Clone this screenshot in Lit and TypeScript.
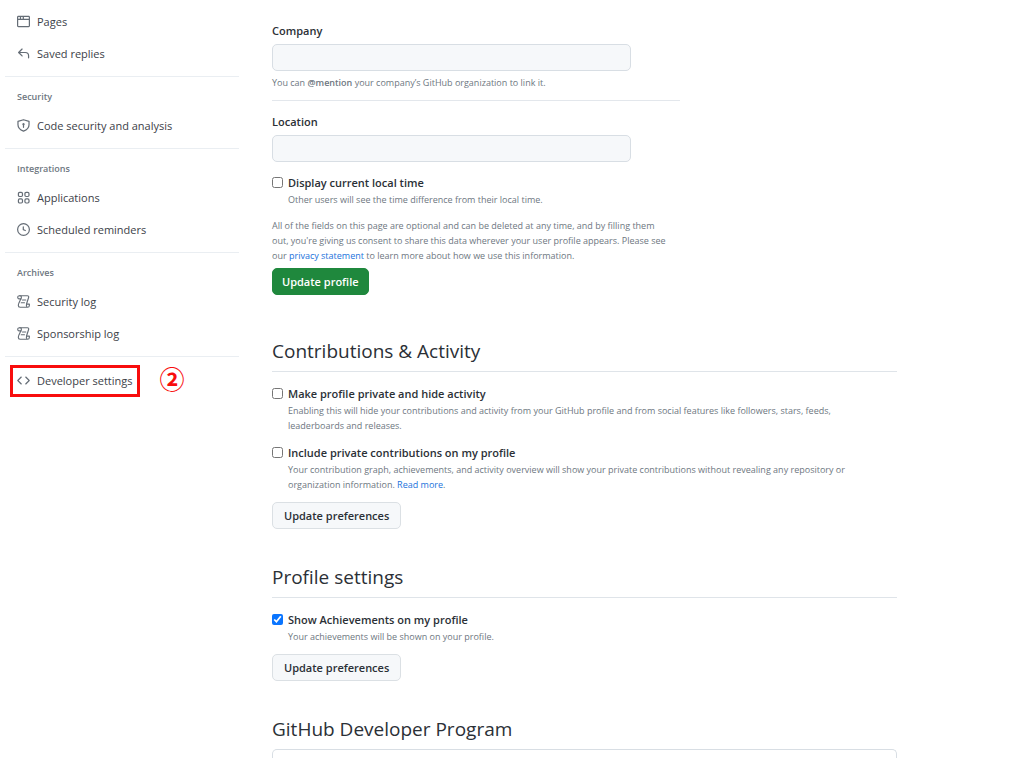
import { LitElement, html, css, svg } from "lit";
import { customElement, property } from "lit/decorators.js";

const icons: Record<string, unknown> = {
  browser: svg`<path d="M0 2.75C0 1.784.784 1 1.75 1h12.5c.966 0 1.75.784 1.75 1.75v10.5A1.75 1.75 0 0 1 14.25 15H1.75A1.75 1.75 0 0 1 0 13.25ZM14.5 6h-13v7.25c0 .138.112.25.25.25h12.500a.25.25 0 0 0 .25-.25Zm-6-3.500v2h6V2.750a.25.25 0 0 0-.25-.25ZM5 2.500v2h2v-2Zm-3.250 0a.25.25 0 0 0-.25.25V4.500h2v-2Z"/>`,
  reply: svg`<path d="M6.780 1.970a.75.75 0 0 1 0 1.060L3.810 6h6.440A4.750 4.750 0 0 1 15 10.750v2.500a.75.75 0 0 1-1.500 0v-2.500a3.250 3.250 0 0 0-3.250-3.250H3.810l2.970 2.970a.75.75 0 1 1-1.060 1.060L1.470 7.280a.75.75 0 0 1 0-1.060l4.250-4.250a.75.75 0 0 1 1.060 0Z"/>`,
  shield: svg`<path fill="none" stroke="currentColor" stroke-width="1.5" stroke-linejoin="round" d="M8 .9 14.800 2.900V7c0 3.600-2.600 6.300-6.800 8C3.800 13.300 1.200 10.600 1.200 7V2.900Z"/><path d="M9.500 6.500a1.500 1.500 0 0 1-.75 1.300v2.450a.75.75 0 0 1-1.500 0V7.800A1.500 1.500 0 1 1 9.500 6.500Z"/>`,
  apps: svg`<g fill="none" stroke="currentColor" stroke-width="1.5"><rect x="1.750" y="1.750" width="5" height="5" rx="1.500"/><rect x="9.750" y="1.750" width="5" height="5" rx="1.500"/><rect x="1.750" y="9.750" width="5" height="5" rx="1.500"/><rect x="9.750" y="9.750" width="5" height="5" rx="1.500"/></g>`,
  clock: svg`<path d="M8 0a8 8 0 1 1 0 16A8 8 0 0 1 8 0ZM1.500 8a6.500 6.500 0 1 0 13 0 6.500 6.500 0 0 0-13 0Zm7-3.250v2.992l2.028.812a.75.75 0 0 1-.557 1.392l-2.500-1A.751.751 0 0 1 7 8.250v-3.500a.75.75 0 0 1 1.500 0Z"/>`,
  log: svg`<g fill="none" stroke="currentColor" stroke-width="1.4" stroke-linecap="round" stroke-linejoin="round"><path d="M5 4.800H2.600C1.500 4.800.9 4 .9 2.900.9 1.700 1.800.9 3 .9h9.800c1.300 0 1.900 1 1.500 2.200l-2.500 7.700"/><path d="M3.300.9c1.400 0 2.300.9 2.100 2.200-.3 2.100-3.800 6.800-3.800 9.600 0 1.500.9 2.400 2.200 2.400h9.200c1.300 0 2.200-1 2.200-2.200v-1.700h-3.400c-.6 1.700.1 3.900 1.200 3.900"/><path d="M6.800 6.200h4M5.200 9.600h4"/></g>`,
  code: svg`<path d="m11.280 3.220 4.250 4.250a.75.75 0 0 1 0 1.060l-4.250 4.250a.75.75 0 0 1-1.060-1.060L13.940 8l-3.720-3.720a.75.75 0 0 1 1.060-1.060Zm-6.560 0a.75.75 0 0 1 1.060 1.060L2.060 8l3.720 3.720a.75.75 0 0 1-1.060 1.060L.470 8.530a.75.75 0 0 1 0-1.060Z"/>`,
};

interface NavItem {
  icon: string;
  label: string;
}

const groups: { title?: string; items: NavItem[] }[] = [
  { items: [{ icon: "browser", label: "Pages" }, { icon: "reply", label: "Saved replies" }] },
  { title: "Security", items: [{ icon: "shield", label: "Code security and analysis" }] },
  {
    title: "Integrations",
    items: [{ icon: "apps", label: "Applications" }, { icon: "clock", label: "Scheduled reminders" }],
  },
  {
    title: "Archives",
    items: [{ icon: "log", label: "Security log" }, { icon: "log", label: "Sponsorship log" }],
  },
];

const link = (item: NavItem) => html`
  <a class="link" href="#">
    <svg class="icon" viewBox="0 0 16 16" aria-hidden="true">${icons[item.icon]}</svg>
    <span>${item.label}</span>
  </a>
`;

@customElement("settings-nav")
export class SettingsNav extends LitElement {
  static styles = css`
    :host {
      display: block;
    }
    .group {
      padding-bottom: 6px;
      border-bottom: 1px solid #eaeef2;
    }
    .title {
      margin: 0;
      padding: 12px 12px 5px;
      font-size: 9px;
      line-height: 16px;
      font-weight: 600;
      color: #6e7781;
    }
    .link {
      box-sizing: border-box;
      display: flex;
      align-items: center;
      gap: 7px;
      height: 32px;
      padding: 0 12px 2px;
      color: #3c4148;
      text-decoration: none;
      white-space: nowrap;
    }
    .icon {
      flex: none;
      width: 13px;
      height: 13px;
      overflow: visible;
      fill: currentColor;
      color: #656d76;
    }
    .last {
      display: flex;
      align-items: flex-start;
      gap: 19px;
      padding: 8px 0 0 5px;
    }
    .marked {
      box-sizing: border-box;
      border: 3px solid #f80d0d;
    }
    .marked .link {
      height: 26px;
      padding: 0 5px 2px 4px;
    }
    .step {
      font: 700 25px/26px "Noto Sans CJK JP", sans-serif;
      color: #f80d0d;
    }
  `;

  render() {
    return html`
      <nav aria-label="Settings">
        ${groups.map(
          (g) => html`
            <div class="group">
              ${g.title ? html`<h3 class="title">${g.title}</h3>` : null} ${g.items.map(link)}
            </div>
          `
        )}
        <div class="last">
          <div class="marked">${link({ icon: "code", label: "Developer settings" })}</div>
          <span class="step">②</span>
        </div>
      </nav>
    `;
  }
}

@customElement("check-option")
export class CheckOption extends LitElement {
  @property() label = "";
  @property({ type: Boolean }) checked = false;

  static styles = css`
    :host {
      display: grid;
      grid-template-columns: 11px 1fr;
      column-gap: 5px;
    }
    .box {
      width: 11px;
      height: 11px;
      margin: 2px 0 0;
      accent-color: #0a75ff;
    }
    .label {
      padding-bottom: 2px;
      font-weight: 600;
      line-height: 15px;
    }
    .note {
      grid-column: 2;
      margin: 0;
      padding-right: 32px;
      font-size: 9px;
      line-height: 15px;
      color: #6e7781;
    }
  `;

  render() {
    return html`
      <input class="box" type="checkbox" id="box" aria-describedby="note" .checked=${this.checked} />
      <label class="label" for="box">${this.label}</label>
      <p class="note" id="note"><slot></slot></p>
    `;
  }
}

@customElement("app-root")
export class AppRoot extends LitElement {
  static styles = css`
    :host {
      display: grid;
      grid-template-columns: 234px minmax(0, 1fr);
      column-gap: 33px;
      padding: 6px 127px 0 5px;
      background: #fff;
      color: #2b3036;
      font-family: "Open Sans", "Noto Sans", sans-serif;
      font-size: 11px;
    }
    .content {
      padding-top: 17px;
    }
    .profile {
      max-width: 408px;
    }
    .label {
      display: block;
      padding-bottom: 2px;
      font-weight: 600;
      line-height: 15px;
    }
    .field {
      display: block;
      box-sizing: border-box;
      width: 88%;
      height: 27px;
      margin-top: 4px;
      padding: 4px 10px;
      border: 1px solid #d8dee4;
      border-radius: 5px;
      background: #f6f8fa;
      font: inherit;
    }
    .note {
      margin: 4px 0 0;
      font-size: 9px;
      line-height: 15px;
      color: #6e7781;
    }
    .mention {
      font-weight: 600;
    }
    .rule {
      margin: 10px 0 13px;
      border: 0;
      border-top: 1px solid #e3e7ec;
    }
    .time {
      margin-top: 13px;
    }
    .terms {
      margin: 11px 0 5px;
      padding-right: 12px;
    }
    .inline {
      color: #2172dc;
      text-decoration: none;
    }
    .button {
      height: 27px;
      padding: 0 11px;
      border: 1px solid #dbe0e4;
      border-radius: 5px;
      background: #f6f8fa;
      color: #2b3036;
      font: inherit;
      font-weight: 600;
    }
    .primary {
      padding: 0 9px;
      border-color: #1f883d;
      background: #1f883d;
      color: #fff;
    }
    .section {
      padding-top: 34px;
    }
    .profile + .section {
      padding-top: 42px;
    }
    .heading {
      margin: 0;
      padding-bottom: 6px;
      font-size: 19px;
      line-height: 28px;
      font-weight: 400;
    }
    .options {
      display: grid;
      gap: 12px;
      padding: 14px 0 10px;
      border-top: 1px solid #dfe4e9;
    }
    .panel {
      height: 8px;
      border: 1px solid #d8dee4;
      border-bottom: 0;
      border-radius: 5px 5px 0 0;
    }
  `;

  render() {
    return html`
      <settings-nav></settings-nav>
      <main class="content">
        <form class="profile">
          <label class="label" for="company">Company</label>
          <input class="field" id="company" type="text" />
          <p class="note">
            You can <b class="mention">@mention</b> your company’s GitHub organization to link it.
          </p>
          <hr class="rule" />
          <label class="label" for="location">Location</label>
          <input class="field" id="location" type="text" />
          <check-option class="time" label="Display current local time"
            >Other users will see the time difference from their local time.</check-option
          >
          <p class="note terms">
            All of the fields on this page are optional and can be deleted at any time, and by filling them out,
            you're giving us consent to share this data wherever your user profile appears. Please see our
            <a class="inline" href="#">privacy statement</a> to learn more about how we use this information.
          </p>
          <button class="button primary" type="button">Update profile</button>
        </form>

        <section class="section">
          <h2 class="heading">Contributions &amp; Activity</h2>
          <div class="options">
            <check-option label="Make profile private and hide activity"
              >Enabling this will hide your contributions and activity from your GitHub profile and from social
              features like followers, stars, feeds, leaderboards and releases.</check-option
            >
            <check-option label="Include private contributions on my profile"
              >Your contribution graph, achievements, and activity overview will show your private contributions
              without revealing any repository or organization information.
              <a class="inline" href="#">Read more</a>.</check-option
            >
          </div>
          <button class="button" type="button">Update preferences</button>
        </section>

        <section class="section">
          <h2 class="heading">Profile settings</h2>
          <div class="options">
            <check-option label="Show Achievements on my profile" checked
              >Your achievements will be shown on your profile.</check-option
            >
          </div>
          <button class="button" type="button">Update preferences</button>
        </section>

        <section class="section">
          <h2 class="heading">GitHub Developer Program</h2>
          <div class="panel"></div>
        </section>
      </main>
    `;
  }
}
